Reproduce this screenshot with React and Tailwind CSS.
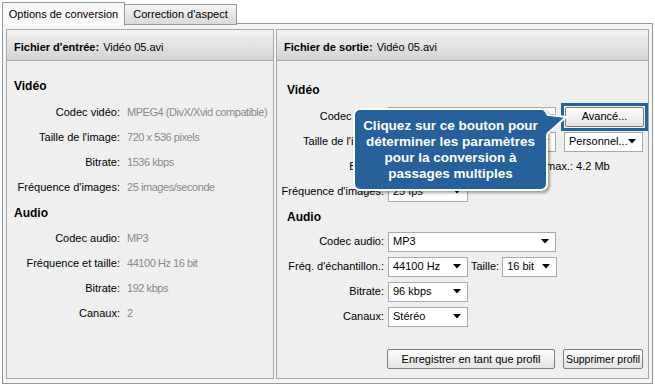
import React from 'react';

const leftVideo = [
  ['Codec vidéo:', 'MPEG4 (DivX/Xvid compatible)'],
  ["Taille de l'image:", '720 x 536 pixels'],
  ['Bitrate:', '1536 kbps'],
  ["Fréquence d'images:", '25 images/seconde'],
];

const leftAudio = [
  ['Codec audio:', 'MP3'],
  ['Fréquence et taille:', '44100 Hz 16 bit'],
  ['Bitrate:', '192 kbps'],
  ['Canaux:', '2'],
];

const Arrow = () => (
  <svg width="8" height="5" viewBox="0 0 8 5" className="shrink-0">
    <path d="M0 0 H8 L4 4.5 Z" fill="#000" />
  </svg>
);

const Select = ({ value, w }) => (
  <div className={`${w} h-[20px] bg-white border border-[#a7abb0] flex items-center justify-between pl-[4px] pr-[6px] shrink-0`}>
    <span className="whitespace-nowrap">{value}</span>
    <Arrow />
  </div>
);

const Header = ({ label, file }) => (
  <div className="h-[31px] flex items-center px-[7px] pt-[4px] border-b border-[#a9a9a9] bg-gradient-to-b from-[#f3f3f3] to-[#d3d3d3]">
    <span className="font-bold">{label}</span>
    <span className="ml-[4px]">{file}</span>
  </div>
);

const InfoRow = ({ label, value }) => (
  <div className="h-[25px] flex items-center">
    <div className="w-[113px] text-right whitespace-nowrap">{label}</div>
    <div className="ml-[7px] text-[#8a8a8a] whitespace-nowrap tracking-[-0.45px]">{value}</div>
  </div>
);

const FormRow = ({ label, children }) => (
  <div className="h-[25px] flex items-center">
    <div className="w-[107px] text-right whitespace-nowrap">{label}</div>
    <div className="ml-[4px] flex items-center">{children}</div>
  </div>
);

const XpButton = ({ children, className = '' }) => (
  <div className={`h-[20px] flex items-center justify-center whitespace-nowrap rounded-[2px] border border-[#7d7d7d] bg-gradient-to-b from-[#fdfdfd] to-[#e4e4e4] ${className}`}>
    {children}
  </div>
);

export default function App() {
  return (
    <div className="relative w-[655px] h-[387px] bg-white text-[11px] text-black font-['Liberation_Sans',Arial,sans-serif] leading-none overflow-hidden">
      {/* tabs */}
      <div className="flex items-start pl-[2px] pt-[2px] h-[24px]">
        <div className="relative z-10 h-[24px] w-[123px] flex items-center justify-center border border-b-0 border-[#919b9c] bg-[#f7f7f7]">
          Options de conversion
        </div>
        <div className="mt-[2px] h-[21px] w-[112px] flex items-center justify-center border border-l-0 border-[#919b9c] bg-gradient-to-b from-[#f5f5f5] to-[#d9d9d9]">
          Correction d'aspect
        </div>
      </div>

      {/* tab page */}
      <div className="mx-[2px] -mt-px h-[361px] border border-[#919b9c] bg-[#f4f4f4] flex gap-[2px] px-[3px] pt-[5px] pb-[4px]">
        {/* input panel */}
        <div className="w-[268px] border border-[#a9a9a9] bg-[#efefef] flex flex-col">
          <Header label="Fichier d'entrée:" file="Vidéo 05.avi" />
          <div className="pl-[7px] pt-[15px]">
            <div className="h-[20px] flex items-center font-bold text-[12px]">Vidéo</div>
          </div>
          <div className="mt-[4px]">
            {leftVideo.map(([l, v]) => <InfoRow key={l} label={l} value={v} />)}
          </div>
          <div className="pl-[7px] mt-[3px] h-[20px] flex items-center font-bold text-[12px]">Audio</div>
          <div className="mt-[3px]">
            {leftAudio.map(([l, v]) => <InfoRow key={l} label={l} value={v} />)}
          </div>
        </div>

        {/* output panel */}
        <div className="flex-1 border border-[#a9a9a9] bg-[#efefef] flex flex-col">
          <Header label="Fichier de sortie:" file="Vidéo 05.avi" />
          <div className="pl-[10px] pt-[19px] h-[39px] flex items-end font-bold text-[12px]">
            <div className="h-[20px] flex items-center">Vidéo</div>
          </div>
          <div className="mt-[4px]">
            <FormRow label="Codec vidéo:">
              <Select w="w-[168px]" value="MPEG4 (DivX/Xvid compatible)" />
              <div className="ml-[5px] border-[3px] border-[#25619b] p-px">
                <XpButton className="w-[79px]">Avancé...</XpButton>
              </div>
            </FormRow>
            <FormRow label="Taille de l'image:">
              <Select w="w-[168px]" value="720 x 536" />
              <div className="ml-[8px]"><Select w="w-[79px]" value="Personnel..." /></div>
            </FormRow>
            <FormRow label="Bitrate:">
              <Select w="w-[80px]" value="1536 kbps" />
              <span className="ml-[50px] whitespace-nowrap">Taille max.: 4.2 Mb</span>
            </FormRow>
            <FormRow label="Fréquence d'images:">
              <Select w="w-[80px]" value="25 fps" />
            </FormRow>
          </div>
          <div className="pl-[10px] mt-[3px] h-[20px] flex items-center font-bold text-[12px]">Audio</div>
          <div className="mt-[2px]">
            <FormRow label="Codec audio:">
              <Select w="w-[168px]" value="MP3" />
            </FormRow>
            <FormRow label="Fréq. d'échantillon.:">
              <Select w="w-[80px]" value="44100 Hz" />
              <span className="ml-[3px] mr-[3px]">Taille:</span>
              <Select w="w-[55px]" value="16 bit" />
            </FormRow>
            <FormRow label="Bitrate:">
              <Select w="w-[80px]" value="96 kbps" />
            </FormRow>
            <FormRow label="Canaux:">
              <Select w="w-[80px]" value="Stéréo" />
            </FormRow>
          </div>
          <div className="mt-[20px] flex justify-end gap-[8px] pr-[5px]">
            <XpButton className="w-[168px]">Enregistrer en tant que profil</XpButton>
            <XpButton className="w-[80px] text-[10.5px]">Supprimer profil</XpButton>
          </div>
        </div>
      </div>

      {/* callout */}
      <div className="absolute left-[353px] top-[108px] w-[195px] h-[83px] rounded-[7px] border-2 border-white bg-[#26619c] shadow-[2px_2px_3px_rgba(0,0,0,0.35)] flex items-center justify-center">
        <p className="text-white font-bold text-[13.5px] leading-[16px] text-center whitespace-nowrap">
          Cliquez sur ce bouton pour<br />
          déterminer les paramètres<br />
          pour la conversion à<br />
          passages multiples
        </p>
      </div>
      <svg className="absolute left-[540px] top-[110px]" width="30" height="34" viewBox="0 0 30 34">
        <polygon points="0,4 26,7 0,30" fill="#26619c" />
        <polyline points="7,4.8 26,7 7,24" fill="none" stroke="#fff" strokeWidth="2" />
      </svg>
    </div>
  );
}
